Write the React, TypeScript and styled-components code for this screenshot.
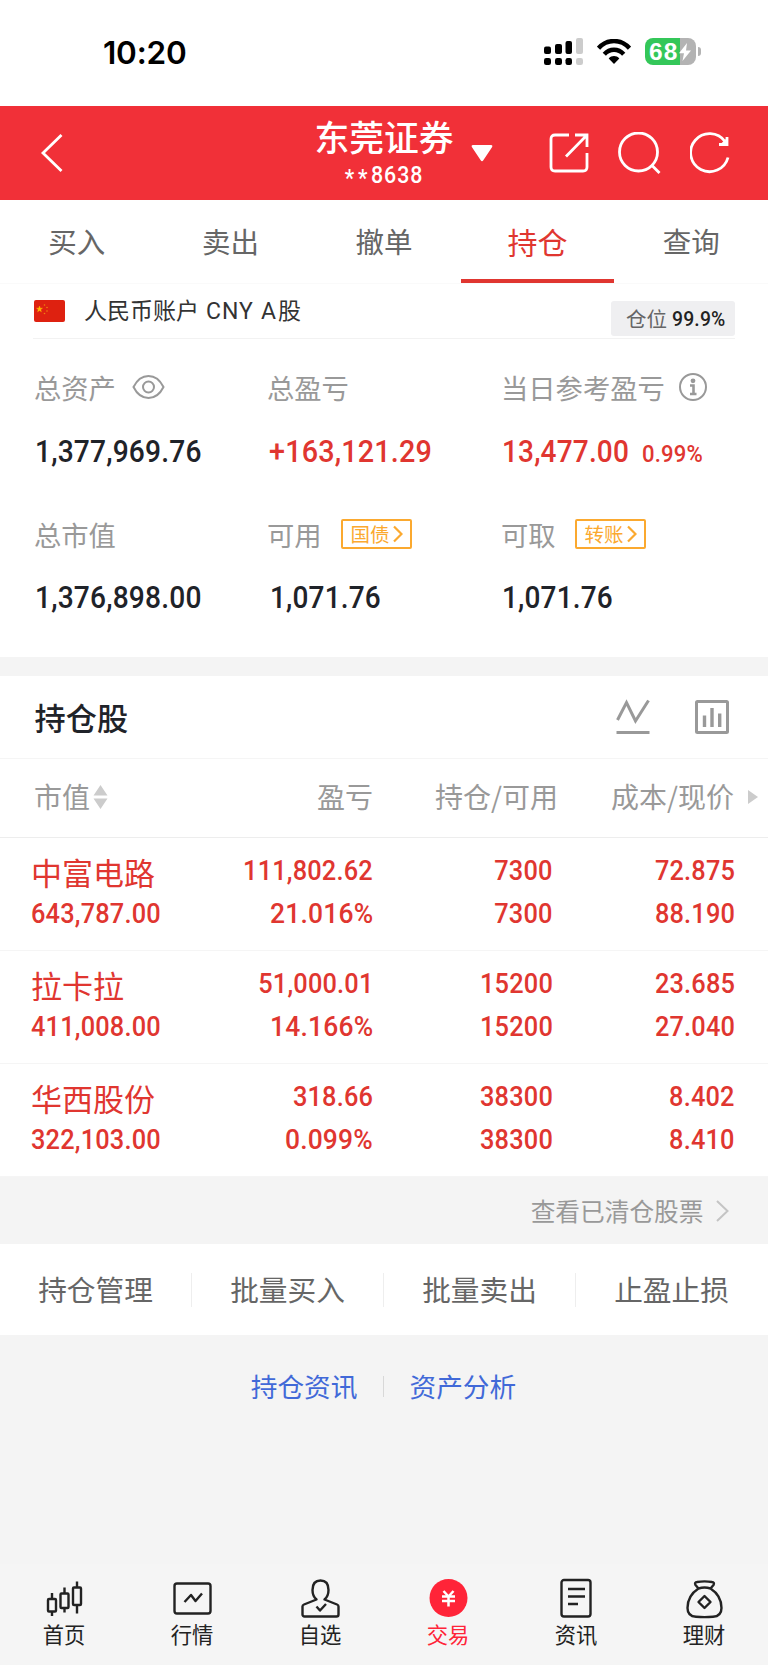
import React from 'react';
import styled, { createGlobalStyle, css } from 'styled-components';

const CJK = '"Noto Sans CJK SC", sans-serif';
const RED = '#e03630';
const LINE = '#f5f5f5';

const GlobalStyle = createGlobalStyle`
  * { box-sizing: border-box; }
  body { margin: 0; background: #f4f4f4; font-family: Roboto, ${CJK}; color: #1f2329; }
  svg { display: block; flex: none; }
`;

const Page = styled.div`
  width: 768px;
  height: 1665px;
  display: flex;
  flex-direction: column;
  overflow: hidden;
`;

/* Digits are slightly condensed; $anchor keeps the outer edge aligned. */
const Num = styled.span<{ $size: number; $anchor?: 'left' | 'right' | 'center'; $weight?: number; $scale?: number }>`
  display: inline-block;
  font-family: Roboto, sans-serif;
  font-size: ${p => p.$size}px;
  font-weight: ${p => p.$weight ?? 500};
  letter-spacing: 0.2px;
  white-space: nowrap;
  transform: scaleX(${p => p.$scale ?? 0.89});
  transform-origin: ${p => p.$anchor ?? 'left'} center;
`;

const StatusBar = styled.header`
  height: 105.500px;
  flex: none;
  background: #fff;
  display: flex;
  align-items: flex-start;
  justify-content: space-between;
  padding: 38px 67px 0 103px;
`;
const Clock = styled.div`
  font: 600 31.5px/29px Inter, sans-serif;
  color: #000;
  letter-spacing: -0.2px;
`;
const StatusIcons = styled.div`
  display: flex;
  align-items: center;
  gap: 14px;
`;
const Battery = styled.div`
  display: flex;
  align-items: center;
  gap: 2px;
  &::after {
    content: '';
    width: 3px;
    height: 9px;
    border-radius: 0 3px 3px 0;
    background: #b3b3b3;
  }
`;
const BatteryBody = styled.div`
  width: 51px;
  height: 27px;
  border-radius: 8px;
  background: linear-gradient(90deg, #34c759 68%, #b3b3b3 68%);
  display: flex;
  align-items: center;
  padding-left: 4px;
  font: 700 24.5px/27px "Liberation Sans", sans-serif;
  letter-spacing: 1px;
  color: #fff;
`;

const TopBar = styled.div`
  height: 94.500px;
  flex: none;
  background: #f13038;
  color: #fff;
  display: grid;
  grid-template-columns: 315px 138px 1fr;
  align-items: center;
`;
const BackButton = styled.div`padding-left: 40px;`;
const Account = styled.div`
  display: flex;
  flex-direction: column;
  align-items: center;
`;
const BrokerName = styled.div`
  height: 38px;
  font: 500 34.8px/35px ${CJK};
  white-space: nowrap;
`;
const AccountNo = styled.div`
  height: 26px;
  margin-top: 4px;
  line-height: 28px;
  & > span { letter-spacing: 1.1px; }
`;
const Mask = styled.span`
  letter-spacing: 4px;
  vertical-align: -3px;
`;
const TopActions = styled.div`
  display: flex;
  align-items: center;
  padding-left: 18px;
`;
const Caret = styled.svg`margin-right: 56px;`;
const ActionIcon = styled.svg`margin-right: 29px;`;

const Tabs = styled.nav`
  height: 84px;
  flex: none;
  background: #fff;
  display: flex;
  border-bottom: 1px solid #fafafa;
`;
const Tab = styled.div<{ $active?: boolean }>`
  flex: 1;
  display: flex;
  justify-content: center;
  font: 400 28.5px/82px ${CJK};
  color: #666;
  ${p => p.$active && css`
    font-size: 30px;
    color: ${RED};
    box-shadow: inset 0 -4px ${RED};
  `}
`;

const CurrencyRow = styled.div`
  background: #fff;
  flex: none;
  height: 55px;
  padding: 0 33px;
`;
const CurrencyInner = styled.div`
  height: 55px;
  border-bottom: 1px solid #f2f2f2;
  display: flex;
  align-items: flex-start;
`;
const CurrencyName = styled.div`
  margin-left: 19px;
  font: 400 23px/56px Roboto, ${CJK};
  color: #333;
  flex: 1;
  display: flex;
`;
const Latin = styled.span<{ $gap: number }>`
  margin: 0 ${p => p.$gap}px 0 7px;
  letter-spacing: 1px;
`;
const Flag = styled.svg`margin: 16px 0 0 1px;`;
const PositionTag = styled.div`
  margin-top: 17px;
  width: 124px;
  height: 35px;
  border-radius: 3px;
  background: #efeff1;
  padding-left: 15px;
  display: flex;
  gap: 5px;
  font: 400 20.5px/34px ${CJK};
  color: #666;
  & > span { line-height: 37px; color: #222; }
`;

const Summary = styled.section`
  height: 317.500px;
  flex: none;
  background: #fff;
  padding: 28px 0 0 34px;
  display: grid;
  grid-template-columns: 233px 234px 1fr;
  grid-template-rows: 147px 1fr;
`;
const StatLabel = styled.div`
  display: flex;
  align-items: center;
  height: 40px;
  font: 400 27.3px/38px ${CJK};
  color: #999;
`;
const StatValue = styled.div<{ $up?: boolean; $top: number; $inset?: number }>`
  margin-top: ${p => p.$top}px;
  padding-left: ${p => p.$inset ?? 1}px;
  height: 40px;
  line-height: 40px;
  display: flex;
  align-items: baseline;
  color: ${p => (p.$up ? RED : '#1f2329')};
`;
const DayRate = styled.span`margin-left: -5px;`;
const EyeIcon = styled.svg`margin-left: 16px;`;
const InfoIcon = styled.svg`margin-left: 13px;`;
const LinkBadge = styled.span`
  margin: -1px 0 0 19px;
  width: 71px;
  height: 30px;
  border: 2px solid #fba92f;
  border-radius: 2px;
  color: #fba92f;
  font: 400 19.5px/26px ${CJK};
  display: flex;
  align-items: center;
  padding-left: 8px;
  gap: 3px;
`;

const Gap = styled.div`
  height: 19.500px;
  flex: none;
  background: #f4f4f4;
`;

const HoldingsHead = styled.div`
  height: 83px;
  flex: none;
  background: #fff;
  border-bottom: 1px solid ${LINE};
  display: flex;
  align-items: center;
  padding: 0 39px 0 34.500px;
`;
const HoldingsTitle = styled.h2`
  margin: 0;
  flex: 1;
  font: 500 31.2px/40px ${CJK};
  color: #1f2329;
`;
const ChartLineIcon = styled.svg`margin-right: 45px;`;

const TableHead = styled.div`
  height: 79px;
  flex: none;
  background: #fff;
  border-bottom: 1px solid #ededed;
  display: grid;
  grid-template-columns: 205px 134px 185px 176px 1fr;
  align-items: center;
  padding-left: 34px;
  font: 400 28px/75px ${CJK};
  color: #999;
`;
const HeadCell = styled.div<{ $right?: boolean }>`
  display: flex;
  align-items: center;
  height: 78px;
  padding-bottom: 3px;
  gap: 3px;
  justify-content: ${p => (p.$right ? 'flex-end' : 'flex-start')};
  white-space: nowrap;
`;
const MoreArrow = styled.svg`margin: -3px 0 0 14px;`;
const SortIcon = styled.svg``;

const StockRow = styled.div`
  height: 113px;
  flex: none;
  background: #fff;
  border-bottom: 1px solid ${LINE};
  display: grid;
  grid-template-columns: 210px 132px 180px 182px;
  padding: 11px 0 0 31px;
  color: ${RED};
`;
const StockCell = styled.div<{ $right?: boolean }>`
  display: flex;
  flex-direction: column;
  align-items: ${p => (p.$right ? 'flex-end' : 'flex-start')};
  line-height: 43px;
`;
const StockName = styled.div`
  height: 43px;
  font: 400 31px/46px ${CJK};
`;

const ClearedLink = styled.div`
  height: 67px;
  flex: none;
  background: #f4f4f4;
  display: flex;
  align-items: center;
  justify-content: flex-end;
  gap: 12.500px;
  padding-right: 39px;
  font: 400 24.7px/40px ${CJK};
  color: #999;
`;
const ClearedText = styled.span`margin-top: -2px;`;

const Actions = styled.div`
  height: 91px;
  flex: none;
  background: #fff;
  display: flex;
  align-items: center;
`;
const ActionButton = styled.div`
  flex: 1;
  height: 34px;
  padding-right: 1px;
  text-align: center;
  font: 400 28.7px/32px ${CJK};
  color: #666;
  & + & { box-shadow: -1px 0 #eee; }
`;

const InfoLinks = styled.div`
  flex: 1;
  display: flex;
  justify-content: center;
  align-items: flex-start;
  padding: 31px 1px 0 0;
  font: 400 26.7px/40px ${CJK};
  color: #4169d8;
`;
const LinkDivider = styled.i`
  width: 1px;
  height: 21px;
  margin: 10px 25.500px 0;
  background: #d8d8d8;
`;

const BottomNav = styled.nav`
  height: 101px;
  flex: none;
  background: #f5f5f5;
  display: flex;
`;
const NavItem = styled.div<{ $active?: boolean }>`
  flex: 1;
  display: flex;
  flex-direction: column;
  align-items: center;
  padding: 14px 0 0 0;
  font: 400 21.3px/30px ${CJK};
  color: ${p => (p.$active ? '#ff2438' : '#222')};
`;

const navItems: { label: string; active?: boolean; icon: React.ReactNode }[] = [
  {
    label: '首页',
    icon: (
      <g>
        <path d="M7 15v6m0 12.500v4.500M19.500 9.500v6m0 14.500v4.500M32 3.500v6m0 17.500v8.500" />
        <rect x="3" y="21" width="8" height="12.500" rx="1" />
        <rect x="15.500" y="15.500" width="8" height="14.500" rx="1" />
        <rect x="28" y="9.500" width="8" height="17.500" rx="1" />
      </g>
    ),
  },
  {
    label: '行情',
    icon: (
      <g>
        <rect x="1.500" y="5.500" width="36" height="30" rx="2.500" />
        <path d="M11.500 24l6.500-7 4.500 6 6.500-7.500" />
      </g>
    ),
  },
  {
    label: '自选',
    icon: (
      <g>
        <path d="M15.500 21.500c-3-2.500-4-6-4-9.500C11.500 6 14.500 2.500 19.500 2.500S27.500 6 27.500 12c0 3.500-1 7-4 9.500l12.500 5c1 .4 1.500 1 1.500 2V36.500c0 1.200-.8 2-2 2h-32c-1.200 0-2-.8-2-2v-8c0-1 .5-1.600 1.500-2z" />
        <path d="M15.500 28.500l3.500 4 6-6.500" />
      </g>
    ),
  },
  {
    label: '交易',
    active: true,
    icon: (
      <g>
        <circle cx="19.500" cy="20" r="19" fill="#ff2438" stroke="none" />
        <path d="M14.500 13l5 5.500 5-5.500M19.500 18.500V28.500M13 18.500h13M13 23h13" stroke="#fff" strokeWidth="2.500" strokeLinecap="butt" />
      </g>
    ),
  },
  {
    label: '资讯',
    icon: (
      <g>
        <rect x="4.500" y="2" width="29" height="36.500" rx="2.500" />
        <path d="M11 11h17M11 18.500h17M11 26h10" />
      </g>
    ),
  },
  {
    label: '理财',
    icon: (
      <g>
        <path d="M13.500 10.500L10.500 7c-1-1.600-.2-3 1.500-3 5 -.8 10-.8 15 0 1.700 0 2.500 1.400 1.500 3l-3 3.500" />
        <path d="M13.500 10.500c4-1.300 8-1.300 12 0 7 4.500 11 12 11 19.500 0 6-4 8.500-8.500 8.800-6 .5-11 .5-17 0-5-.3-8.500-2.800-8.500-8.800 0-7.500 4-15 11-19.500z" />
        <path d="M19.500 18l6 6-6 6-6-6z" />
      </g>
    ),
  },
];

const stocks = [
  { name: '中富电路', value: '643,787.00', pnl: '111,802.62', pct: '21.016%', held: '7300', free: '7300', cost: '72.875', price: '88.190' },
  { name: '拉卡拉', value: '411,008.00', pnl: '51,000.01', pct: '14.166%', held: '15200', free: '15200', cost: '23.685', price: '27.040' },
  { name: '华西股份', value: '322,103.00', pnl: '318.66', pct: '0.099%', held: '38300', free: '38300', cost: '8.402', price: '8.410' },
];

const tabs = ['买入', '卖出', '撤单', '持仓', '查询'];
const actions = ['持仓管理', '批量买入', '批量卖出', '止盈止损'];

function RightPair({ a, b }: { a: string; b: string }) {
  return (
    <StockCell $right>
      <Num $size={28.5} $anchor="right">{a}</Num>
      <Num $size={28.5} $anchor="right" $scale={b.endsWith('%') ? 0.927 : 0.89}>{b}</Num>
    </StockCell>
  );
}

function BadgeArrow() {
  return (
    <svg width="10" height="18" viewBox="0 0 10 18" fill="none" stroke="currentColor" strokeWidth="2.200">
      <path d="M1 1.500L8.500 9 1 16.500" />
    </svg>
  );
}

export default function App() {
  return (
    <Page>
      <GlobalStyle />
      <StatusBar>
        <Clock>10:20</Clock>
        <StatusIcons>
          <svg width="39" height="27" viewBox="0 0 39 27">
            <rect x="0" y="8.500" width="7" height="7.500" rx="2" />
            <rect x="11" y="6" width="7" height="10" rx="2" />
            <rect x="21.500" y="3" width="6.500" height="13" rx="2" />
            <rect x="32" y="0" width="7" height="16" rx="2" fill="#ccc" />
            <rect x="0" y="20" width="7" height="7" rx="2.200" />
            <rect x="11" y="20" width="7" height="7" rx="2.200" />
            <rect x="21.500" y="20" width="6.500" height="7" rx="2.200" />
            <rect x="32" y="20" width="7" height="7" rx="2.200" fill="#ccc" />
          </svg>
          <svg width="34" height="25" viewBox="0 0 34 25" fill="none" stroke="#000" strokeWidth="4.400">
            <path d="M1.500 9.200C10-.4 24-.4 32.500 9.200" />
            <path d="M7.300 15.200c5.400-6 14-6 19.400 0" />
            <path d="M11.700 19.500c3-3.200 7.600-3.200 10.600 0L17 25z" fill="#000" stroke="none" />
          </svg>
          <Battery>
            <BatteryBody>
              68
              <svg width="14" height="20" viewBox="0 0 14 20" fill="#fff">
                <path d="M9 1L1 11.300h5L4.500 19 13 8.500H8z" />
              </svg>
            </BatteryBody>
          </Battery>
        </StatusIcons>
      </StatusBar>

      <TopBar>
        <BackButton>
          <svg width="24" height="40" viewBox="0 0 24 40" fill="none" stroke="#fff" strokeWidth="2.800">
            <path d="M21.500 2L3 20 21.500 38" />
          </svg>
        </BackButton>
        <Account>
          <BrokerName>东莞证券</BrokerName>
          <AccountNo><Num $size={24} $anchor="center"><Mask>**</Mask>8638</Num></AccountNo>
        </Account>
        <TopActions>
          <Caret width="22" height="18" viewBox="0 0 22 18" fill="#fff">
            <path d="M2 1h18c1.500 0 1.800 1 1 2.200L12.300 16.300c-.8 1.200-1.800 1.200-2.600 0L1 3.200C.2 2 .5 1 2 1z" />
          </Caret>
          <ActionIcon width="40" height="42" viewBox="0 0 40 42" fill="none" stroke="#fff" strokeWidth="2.800">
            <path d="M20 3H6C3.500 3 2 4.500 2 7v28c0 2.500 1.500 4 4 4h28c2.500 0 4-1.500 4-4V21" />
            <path d="M26 3h12v12M37.500 3.500L17 24.500" />
          </ActionIcon>
          <ActionIcon width="43" height="42" viewBox="0 0 43 42" fill="none" stroke="#fff" strokeWidth="2.800">
            <circle cx="20.500" cy="20" r="19" />
            <path d="M34 33.500l7.500 7.500" />
          </ActionIcon>
          <svg width="40" height="42" viewBox="0 0 40 42" fill="none" stroke="#fff" strokeWidth="2.800">
            <path d="M38 25.500A19 19 0 1 1 35 9.500" />
            <path d="M37 5v7.500h-8" />
            <path d="M37 6l-7 6.500h7z" fill="#fff" stroke="none" />
          </svg>
        </TopActions>
      </TopBar>

      <Tabs>
        {tabs.map(t => <Tab key={t} $active={t === '持仓'}>{t}</Tab>)}
      </Tabs>

      <CurrencyRow>
        <CurrencyInner>
          <Flag width="31" height="22" viewBox="0 0 31 22">
            <rect width="31" height="22" rx="2" fill="#de2110" />
            <path d="M5.500 6l.8 2.200h2.200L6.700 9.600l.7 2.200-1.900-1.400-1.900 1.400.7-2.200L2.500 8.200h2.200z" fill="#fb0" stroke="#fb0" strokeWidth=".4" />
            <g fill="#f08010">
              <circle cx="10.500" cy="5" r=".8" /><circle cx="13" cy="7.500" r=".8" />
              <circle cx="13" cy="11" r=".8" /><circle cx="10.500" cy="13.500" r=".8" />
            </g>
          </Flag>
          <CurrencyName>人民币账户<Latin $gap={0}>CNY</Latin><Latin $gap={1}>A</Latin>股</CurrencyName>
          <PositionTag>仓位<Num $size={21} $scale={0.92}>99.9%</Num></PositionTag>
        </CurrencyInner>
      </CurrencyRow>

      <Summary>
        <div>
          <StatLabel>
            总资产
            <EyeIcon width="33" height="26" viewBox="0 0 33 26" fill="none" stroke="#999" strokeWidth="2">
              <path d="M1.500 13C5 6 10.500 2 16.500 2S28 6 31.500 13C28 20 22.500 24 16.500 24S5 20 1.500 13z" />
              <circle cx="16.500" cy="13" r="5.500" />
            </EyeIcon>
          </StatLabel>
          <StatValue $top={24}><Num $size={32} $scale={0.88}>1,377,969.76</Num></StatValue>
        </div>
        <div>
          <StatLabel>总盈亏</StatLabel>
          <StatValue $up $top={24} $inset={2}><Num $size={32} $scale={0.898}>+163,121.29</Num></StatValue>
        </div>
        <div>
          <StatLabel>
            当日参考盈亏
            <InfoIcon width="30" height="30" viewBox="0 0 30 30" fill="none" stroke="#999" strokeWidth="2">
              <circle cx="15" cy="15" r="13" />
              <circle cx="15" cy="8.800" r="2.400" fill="#999" stroke="none" />
              <path d="M12 13.500h3.500V22M12 22h6.500" strokeWidth="2.600" />
            </InfoIcon>
          </StatLabel>
          <StatValue $up $top={24}>
            <Num $size={32} $scale={0.875}>13,477.00</Num>
            <DayRate><Num $size={24} $scale={0.92}>0.99%</Num></DayRate>
          </StatValue>
        </div>
        <div>
          <StatLabel>总市值</StatLabel>
          <StatValue $top={23}><Num $size={32} $scale={0.88}>1,376,898.00</Num></StatValue>
        </div>
        <div>
          <StatLabel>可用<LinkBadge>国债<BadgeArrow /></LinkBadge></StatLabel>
          <StatValue $top={23} $inset={3}><Num $size={32} $scale={0.875}>1,071.76</Num></StatValue>
        </div>
        <div>
          <StatLabel>可取<LinkBadge>转账<BadgeArrow /></LinkBadge></StatLabel>
          <StatValue $top={23}><Num $size={32} $scale={0.875}>1,071.76</Num></StatValue>
        </div>
      </Summary>

      <Gap />

      <HoldingsHead>
        <HoldingsTitle>持仓股</HoldingsTitle>
        <ChartLineIcon width="34" height="36" viewBox="0 0 34 36" fill="none" stroke="#999" strokeWidth="3">
          <path d="M1.500 21L10.500 3.500 19.500 22 32.500 1.500M.5 33.500h33" />
        </ChartLineIcon>
        <svg width="34" height="34" viewBox="0 0 34 34" fill="none" stroke="#999" strokeWidth="3">
          <rect x="1.500" y="1.500" width="31" height="31" rx="1" />
          <path d="M9.500 15.500v11.500M17 8v19M24.700 13.500V27" strokeWidth="3.400" />
        </svg>
      </HoldingsHead>

      <TableHead>
        <HeadCell>
          市值
          <SortIcon width="15" height="24" viewBox="0 0 15 24" fill="#ccc">
            <path d="M7.500 0L14.500 10.500H.5zM7.500 24L.5 13.500h14z" />
          </SortIcon>
        </HeadCell>
        <HeadCell $right>盈亏</HeadCell>
        <HeadCell $right>持仓/可用</HeadCell>
        <HeadCell $right>成本/现价</HeadCell>
        <MoreArrow width="10" height="14" viewBox="0 0 10 14" fill="#ccc"><path d="M0 0l10 7-10 7z" /></MoreArrow>
      </TableHead>

      {stocks.map(s => (
        <StockRow key={s.name}>
          <StockCell>
            <StockName>{s.name}</StockName>
            <Num $size={28.5}>{s.value}</Num>
          </StockCell>
          <RightPair a={s.pnl} b={s.pct} />
          <RightPair a={s.held} b={s.free} />
          <RightPair a={s.cost} b={s.price} />
        </StockRow>
      ))}

      <ClearedLink>
        <ClearedText>查看已清仓股票</ClearedText>
        <svg width="13" height="22" viewBox="0 0 13 22" fill="none" stroke="#c4c4c4" strokeWidth="2">
          <path d="M1 1l10.500 10L1 21" />
        </svg>
      </ClearedLink>

      <Actions>
        {actions.map(a => <ActionButton key={a}>{a}</ActionButton>)}
      </Actions>

      <InfoLinks>
        持仓资讯
        <LinkDivider />
        资产分析
      </InfoLinks>

      <BottomNav>
        {navItems.map(n => (
          <NavItem key={n.label} $active={n.active}>
            <svg width="39" height="41" viewBox="0 0 39 41" fill="none" stroke="#222" strokeWidth="2.400" strokeLinejoin="round">
              {n.icon}
            </svg>
            {n.label}
          </NavItem>
        ))}
      </BottomNav>
    </Page>
  );
}
